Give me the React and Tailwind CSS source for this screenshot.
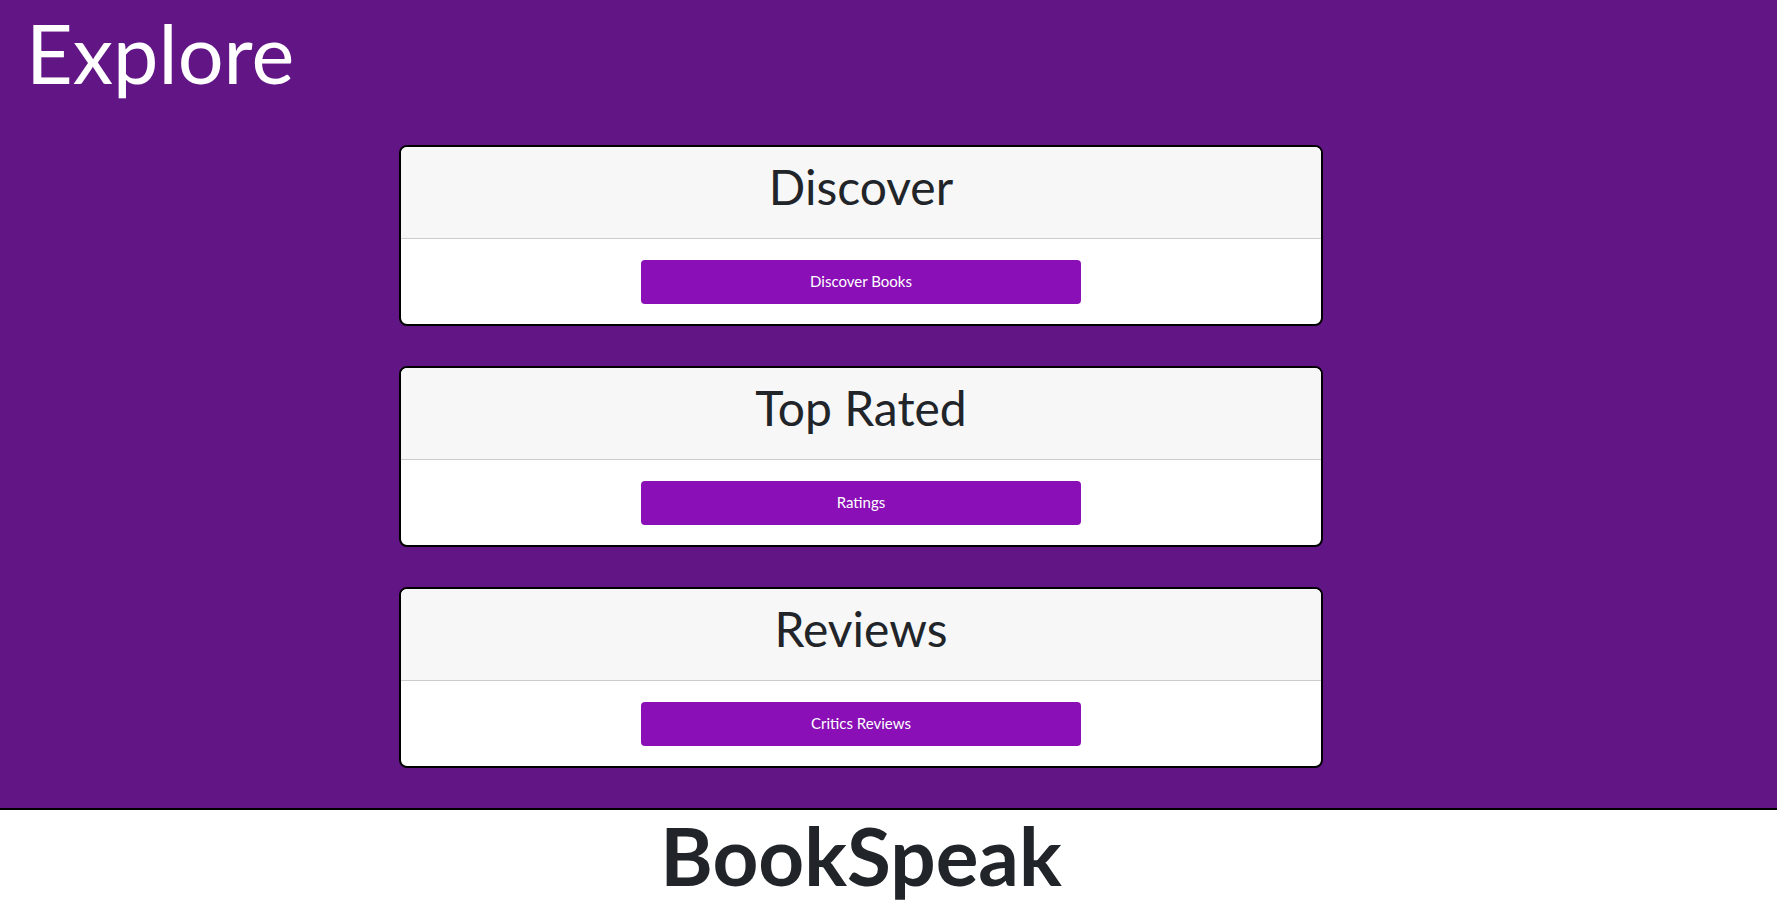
import React from 'react';

const sections = [
  { title: 'Discover', action: 'Discover Books' },
  { title: 'Top Rated', action: 'Ratings' },
  { title: 'Reviews', action: 'Critics Reviews' },
];

function ExploreCard({ title, action }) {
  return (
    <div className="w-[924px] ml-[399px] border-2 border-black rounded-lg overflow-hidden bg-white">
      <div className="h-[92px] bg-[#f7f7f7] border-b border-[#cccccc] text-center">
        <h2 className="pt-[11px] text-[48px] leading-[58px] text-[#212529]">{title}</h2>
      </div>
      <div className="h-[85px] flex items-center justify-center">
        <button className="w-[440px] h-[44px] rounded bg-[#8a0fb6] text-white text-[15px]">
          {action}
        </button>
      </div>
    </div>
  );
}

export default function App() {
  return (
    <div className="min-h-[910px] bg-white" style={{ fontFamily: 'Lato, "Open Sans", sans-serif' }}>
      <main className="bg-[#621686] pb-[40px]">
        <h1 className="pl-[26px] pt-[5px] text-[81px] leading-[96px] text-white">Explore</h1>
        <div className="mt-[44px] flex flex-col gap-[40px]">
          {sections.map((s) => (
            <ExploreCard key={s.title} title={s.title} action={s.action} />
          ))}
        </div>
      </main>
      <footer className="border-t-2 border-black h-[100px]">
        <div className="w-[924px] ml-[399px] text-center pt-[5px]">
          <p className="text-[80px] leading-[80px] font-bold text-[#212529]">BookSpeak</p>
        </div>
      </footer>
    </div>
  );
}
